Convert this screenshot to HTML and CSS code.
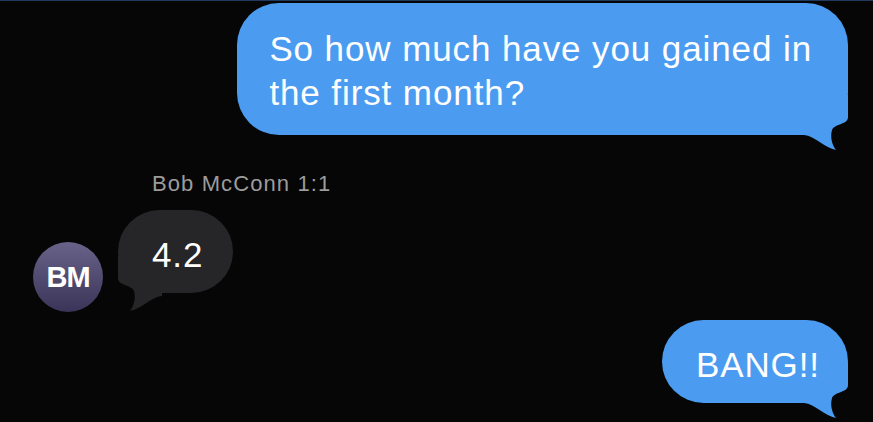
FILE: index.html
```html
<!DOCTYPE html>
<html lang="en">

<head>
    <meta charset="UTF-8">
    <meta name="viewport" content="width=device-width, initial-scale=1.0">
    <title>Messages</title>
    <link rel="stylesheet" href="styles.css">
</head>

<body>
    <div class="thread">
        <div class="row out first">
            <div class="bubble blue">
                So how much have you gained in<br>the first month?
                <svg class="tail right" viewBox="0 0 44 56" width="44" height="56">
                    <path d="M0 0 L44 0 L44 22 C44 30 31 28 28 35 C26 42 28 50 32 55 C21 53 11 41 0 40 Z" />
                </svg>
            </div>
        </div>

        <div class="sender">Bob McConn 1:1</div>

        <div class="row in">
            <div class="avatar">BM</div>
            <div class="bubble gray">
                4.2
                <svg class="tail left" viewBox="0 0 44 56" width="44" height="56">
                    <path d="M44 0 L0 0 L0 22 C0 30 13 28 16 35 C18 42 16 50 12 55 C23 53 33 41 44 40 Z" />
                </svg>
            </div>
        </div>

        <div class="row out last">
            <div class="bubble blue short">
                BANG!!
                <svg class="tail right" viewBox="0 0 44 56" width="44" height="56">
                    <path d="M0 0 L44 0 L44 22 C44 30 31 28 28 35 C26 42 28 50 32 55 C21 53 11 41 0 40 Z" />
                </svg>
            </div>
        </div>
    </div>
</body>

</html>
```

FILE: styles.css
```css
body {
    margin: 0;
    height: 422px;
    overflow: hidden;
    background: #060606;
    border-top: 1px solid #1f3a5f;
    font-family: 'Liberation Sans', Arial, sans-serif;
}

.thread {
    display: flex;
    flex-direction: column;
}

.row {
    display: flex;
    align-items: flex-end;
}

.row.out {
    justify-content: flex-end;
    padding-right: 25px;
}

.row.first {
    margin-top: 2px;
}

.row.in {
    padding-left: 33px;
    gap: 15px;
}

.row.last {
    margin-top: 8px;
}

.bubble {
    position: relative;
    z-index: 0;
    font-size: 35px;
    line-height: 44px;
    letter-spacing: 0.9px;
    color: #fff;
    white-space: nowrap;
    border-radius: 42px;
}

.bubble.blue {
    background: #4b9cf0;
    padding: 24px 36px 20px 32px;
    fill: #4b9cf0;
}

.bubble.short {
    padding: 23px 28px 16px 34px;
}

.bubble.gray {
    background: #262628;
    padding: 23px 30px 16px 34px;
    margin-bottom: 19px;
    fill: #262628;
}

.tail {
    position: absolute;
    z-index: -1;
    bottom: -16px;
}

.tail.right {
    right: 0;
}

.tail.left {
    left: 0;
    bottom: -19px;
}

.sender {
    margin-top: 37px;
    padding-left: 152px;
    font-size: 22px;
    line-height: 24px;
    letter-spacing: 1.1px;
    color: #9c9c9c;
    margin-bottom: 14px;
}

.avatar {
    width: 70px;
    height: 70px;
    border-radius: 50%;
    background: linear-gradient(180deg, #6a6389, #3b3459);
    color: #fff;
    font-weight: bold;
    font-size: 29px;
    display: flex;
    align-items: center;
    justify-content: center;
    letter-spacing: -1px;
}
```
